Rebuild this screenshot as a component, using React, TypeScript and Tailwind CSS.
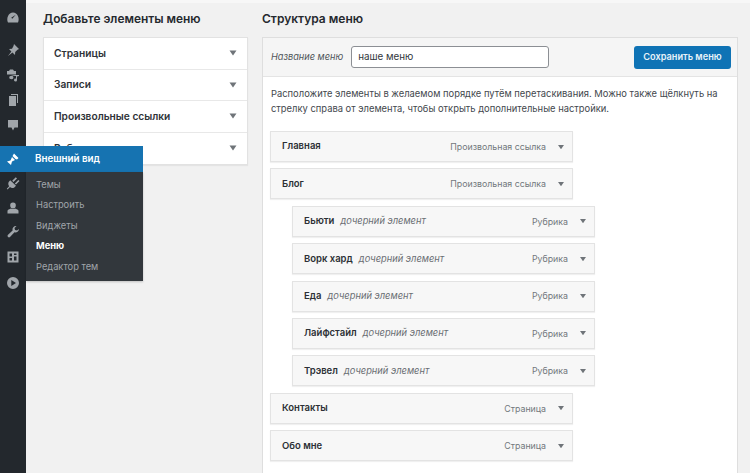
import React from "react";

const Caret = ({ className = "" }: { className?: string }) => (
  <svg width="8" height="6" viewBox="0 0 8 6" className={className}>
    <path d="M0.5 0.5H7.5L4 5.5Z" fill="#6f7479" />
  </svg>
);

const icons: { y: string; el: React.ReactNode }[] = [
  { y: "mt-[10px]", el: <path d="M2 12.500C0 8.500 2.500 2.500 7 2.500s7 6 5 10zM6.300 8.800 9.800 4.800 5.200 7.800z" fillRule="evenodd" /> },
  { y: "mt-[19px]", el: <path d="M8 1l5 5-1.500.7-2.300 2.200L9 12 6.500 9.500 2 13l3.400-4.600L3 6l3-.3L7.500 3z" /> },
  { y: "mt-[11px]", el: <path d="M1 3h2l1-1.500h3L8 3h2v3.500H1zM9 7h4v1l-2 .5v3.500a1.500 1.500 0 1 1-1-1.300V8H6.500a1.500 1.500 0 1 1-1.500 3 1.500 1.500 0 0 1-.5-3z" /> },
  { y: "mt-[11px]", el: <path d="M5 1h7v9h-1V2H5zM3 3h7v10H3z" /> },
  { y: "mt-[11px]", el: <path d="M2 2h10v7.500H8.500L7 12.500 5.500 9.500H2z" /> },
];
const lower: { y: string; el: React.ReactNode }[] = [
  { y: "mt-[13px]", el: <path d="M4.200 4.300 10 9.800 8.300 11.500C6.500 12.500 5 12 4 11L1.500 13.500.8 12.800 3.200 10.300C2.200 9 2 7.500 2.700 6zM6.200 4.800 9.800 1.300 11 2.500 7.500 6zM8.800 7.400 12.300 3.900 13.500 5.100 10 8.600z" /> },
  { y: "mt-[11px]", el: <path d="M7 1.500a2.800 2.800 0 0 1 2.800 3A2.800 3 0 0 1 7 7.500a2.800 3 0 0 1-2.800-3A2.800 2.800 0 0 1 7 1.500zM1.500 12.500V10c0-1.500 2-2 3.500-2.500 1 .8 3 .8 4 0 1.500.5 3.500 1 3.500 2.500v2.500z" /> },
  { y: "mt-[10px]", el: <path d="M13 4a3.500 3.500 0 0 1-4.500 3.300L4 12a1.500 1.500 0 0 1-2.200-2l4.800-4.500A3.500 3.500 0 0 1 10.500 1L8.500 3l.5 2 2 .5z" /> },
  { y: "mt-[11px]", el: <path d="M1.500 1.500h11v11h-11zM3.500 3.500v3h2.500v-3zM8 3.500V5h2.500V3.500zM3.500 8v2.500H6V8zM8 6.500v4h2.500v-4z" fillRule="evenodd" /> },
  { y: "mt-[12px]", el: <path d="M7 1a6 6 0 1 1 0 12A6 6 0 0 1 7 1zM5.300 4v6L10 7z" fillRule="evenodd" /> },
];

const SideIcon = ({ y, el, color = "#a0a5aa" }: { y: string; el: React.ReactNode; color?: string }) => (
  <svg width="14" height="14" viewBox="0 0 14 14" fill={color} className={`${y} shrink-0`}>
    {el}
  </svg>
);

const Accordion = ({ label, last }: { label: string; last?: boolean }) => (
  <div className={`flex h-[31.500px] items-center justify-between pl-[10px] pr-[10px] ${last ? "" : "border-b border-[#e8e8e8]"}`}>
    <span className="text-[10.200px] font-semibold text-[#2f3338]">{label}</span>
    <Caret />
  </div>
);

const MenuItem = ({ title, type, child }: { title: string; type: string; child?: boolean }) => (
  <div className={`flex h-[31px] w-[303px] shrink-0 items-center justify-between border border-[#e3e3e3] bg-[#f7f7f7] pl-[11px] pr-[7px] shadow-[0_1px_1px_rgba(0,0,0,0.06)] ${child ? "ml-[22px]" : ""}`}>
    <span className="flex items-baseline gap-[6px]">
      <span className="text-[9.500px] font-semibold text-[#2c3035]">{title}</span>
      {child && <span className="text-[9.300px] italic text-[#6a6e73]">дочерний элемент</span>}
    </span>
    <span className="flex items-center gap-[11px]">
      <span className="text-[8.800px] text-[#72777c]">{type}</span>
      <Caret className="scale-[0.85]" />
    </span>
  </div>
);

export default function App() {
  return (
    <div className="relative flex h-[473px] w-[750px] overflow-hidden bg-[#f1f1f1] font-['Inter','Liberation_Sans',sans-serif]">
      <aside className="flex w-[26px] shrink-0 flex-col items-center bg-[#23282d]">
        {icons.map((i, n) => (
          <SideIcon key={n} y={i.y} el={i.el} />
        ))}
        <div className="h-[31px] shrink-0" />
        {lower.map((i, n) => (
          <SideIcon key={n} y={i.y} el={i.el} />
        ))}
      </aside>

      <main className="flex flex-1 gap-[14px] border-t-[3px] border-[#f7f7f7] pl-[17px] pt-[7px]">
        <section className="w-[205px] shrink-0">
          <h2 className="h-[17px] text-[11.900px] font-semibold leading-[17px] text-[#25292e]">Добавьте элементы меню</h2>
          <div className="mt-[10px] border border-[#e2e2e2] bg-white shadow-[0_1px_1px_rgba(0,0,0,0.05)]">
            <Accordion label="Страницы" />
            <Accordion label="Записи" />
            <Accordion label="Произвольные ссылки" />
            <Accordion label="Рубрики" last />
          </div>
        </section>

        <section className="flex min-w-0 flex-1 flex-col pr-[12px]">
          <h2 className="h-[17px] text-[12px] font-semibold leading-[17px] text-[#25292e]">Структура меню</h2>
          <div className="mt-[10px] flex flex-1 flex-col border border-b-0 border-[#dedede] bg-white">
            <div className="flex h-[39px] shrink-0 items-center justify-between border-b border-[#e4e4e4] bg-[#f5f5f5] pl-[8px] pr-[6px]">
              <div className="flex items-center gap-[8px]">
                <span className="text-[9.200px] italic text-[#50555a]">Название меню</span>
                <div className="flex h-[22px] w-[198px] items-center rounded-[3px] border border-[#8c8f94] bg-white px-[6px] text-[9.800px] text-[#32373c]">
                  наше меню
                </div>
              </div>
              <button className="h-[23px] w-[97px] rounded-[3px] bg-[#0f73b5] text-[9.200px] font-semibold text-[#e6f2f9]">
                Сохранить меню
              </button>
            </div>
            <div className="pl-[7px] pt-[9px]">
              <p className="ml-[1px] w-[452px] text-[9.400px] leading-[15px] text-[#43484d]">
                Расположите элементы в желаемом порядке путём перетаскивания. Можно также щёлкнуть на стрелку справа от элемента, чтобы открыть дополнительные настройки.
              </p>
              <div className="mt-[15px] flex flex-col gap-[6.400px]">
                <MenuItem title="Главная" type="Произвольная ссылка" />
                <MenuItem title="Блог" type="Произвольная ссылка" />
                <MenuItem child title="Бьюти" type="Рубрика" />
                <MenuItem child title="Ворк хард" type="Рубрика" />
                <MenuItem child title="Еда" type="Рубрика" />
                <MenuItem child title="Лайфстайл" type="Рубрика" />
                <MenuItem child title="Трэвел" type="Рубрика" />
                <MenuItem title="Контакты" type="Страница" />
                <MenuItem title="Обо мне" type="Страница" />
              </div>
            </div>
          </div>
        </section>
      </main>

      <div className="absolute left-0 top-[146px] flex h-[26px] w-[143px] items-center bg-[#1673b1]">
        <div className="flex w-[26px] justify-center">
          <SideIcon y="" color="#ffffff" el={<path d="M8 1.500l4.500 4.500-1.500 1.500L9.500 7 8 5.500 6.500 4zM6 5l3 3-3 1.500L5 13 1 9.500l3.500-1z" />} />
        </div>
        <span className="pl-[9px] text-[9.800px] font-semibold text-white">Внешний вид</span>
      </div>
      <nav className="absolute left-[26px] top-[172px] flex h-[109px] w-[117px] flex-col gap-[5.400px] bg-[#32373c] pl-[10px] pt-[5px] shadow-[0_1px_2px_rgba(0,0,0,0.2)]">
        {["Темы", "Настроить", "Виджеты", "Меню", "Редактор тем"].map((t) => (
          <span key={t} className={`text-[9.300px] leading-[15px] ${t === "Меню" ? "font-bold text-white" : "text-[#a0a5aa]"}`}>
            {t}
          </span>
        ))}
      </nav>
    </div>
  );
}
